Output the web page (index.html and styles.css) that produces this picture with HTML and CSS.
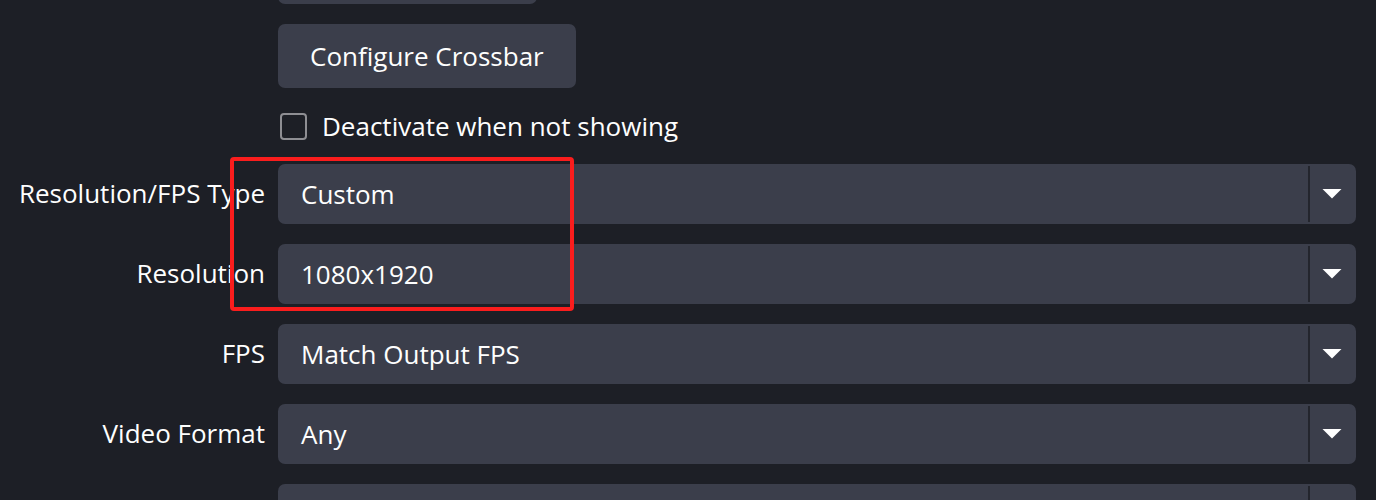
FILE: index.html
```html
<!DOCTYPE html>
<html lang="en">
<head>
    <meta charset="UTF-8">
    <meta name="viewport" content="width=device-width, initial-scale=1.0">
    <title>Video Capture Device Properties</title>
    <link rel="stylesheet" href="styles.css">
</head>
<body>

    <div class="props">
        <!-- Buttons (the first one is scrolled out of view) -->
        <span class="label"></span>
        <div class="field">
            <button class="btn btn-video"></button>
        </div>

        <span class="label"></span>
        <div class="field">
            <button class="btn">Configure Crossbar</button>
        </div>

        <span class="label"></span>
        <label class="field check">
            <span class="box"></span>
            <span>Deactivate when not showing</span>
        </label>

        <!-- Dropdowns -->
        <span class="label">Resolution/FPS Type</span>
        <div class="select">
            <span class="value">Custom</span>
            <span class="drop"><svg width="20" height="10" viewBox="0 0 20 10"><polygon points="0.5,0 19.5,0 10,9.5" fill="#fff"/></svg></span>
        </div>

        <span class="label">Resolution</span>
        <div class="select">
            <span class="value">1080x1920</span>
            <span class="drop"><svg width="20" height="10" viewBox="0 0 20 10"><polygon points="0.5,0 19.5,0 10,9.5" fill="#fff"/></svg></span>
        </div>

        <span class="label">FPS</span>
        <div class="select">
            <span class="value">Match Output FPS</span>
            <span class="drop"><svg width="20" height="10" viewBox="0 0 20 10"><polygon points="0.5,0 19.5,0 10,9.5" fill="#fff"/></svg></span>
        </div>

        <span class="label">Video Format</span>
        <div class="select">
            <span class="value">Any</span>
            <span class="drop"><svg width="20" height="10" viewBox="0 0 20 10"><polygon points="0.5,0 19.5,0 10,9.5" fill="#fff"/></svg></span>
        </div>

        <!-- next row, only its top edge shows -->
        <span class="label"></span>
        <div class="select">
            <span class="value"></span>
            <span class="drop"></span>
        </div>
    </div>

    <!-- Highlight drawn over the screenshot -->
    <div class="highlight"></div>

</body>
</html>
```

FILE: styles.css
```css
body {
    font-family: 'Open Sans', 'Noto Sans', sans-serif;
    font-size: 26px;
    background-color: #1d1f26;
    color: #fefefe;
    margin: 0;
    overflow: hidden;
    position: relative;
    height: 500px;
}

.props {
    display: grid;
    grid-template-columns: 265px 1fr;
    column-gap: 13px;
    row-gap: 20px;
    margin-top: -60px;
    padding-right: 20px;
}

.label {
    display: flex;
    align-items: center;
    justify-content: flex-end;
    white-space: nowrap;
    padding-bottom: 2px;
}

.field {
    display: flex;
    align-items: center;
}

.btn {
    font-family: inherit;
    font-size: 26px;
    color: #fefefe;
    background-color: #3b3e4b;
    border: none;
    border-radius: 7px;
    height: 64px;
    padding: 0 32px;
}

.btn-video {
    width: 259px;
}

.check {
    height: 36px;
    gap: 15px;
    padding-left: 2px;
}

.box {
    width: 23px;
    height: 23px;
    border: 2px solid #8e8e93;
    border-radius: 4px;
    box-sizing: content-box;
}

.select {
    display: flex;
    height: 60px;
    background-color: #3b3e4b;
    border-radius: 7px;
}

.value {
    flex: 1;
    display: flex;
    align-items: center;
    padding-left: 23px;
}

.drop {
    width: 48px;
    display: flex;
    align-items: center;
    justify-content: center;
    position: relative;
}

.drop::before {
    content: "";
    position: absolute;
    left: 0;
    top: 2px;
    bottom: 2px;
    width: 2px;
    background-color: #23252d;
}

.highlight {
    position: absolute;
    left: 230px;
    top: 157px;
    width: 336px;
    height: 146px;
    border: 4px solid #fa1d1d;
    border-radius: 4px;
}
```
